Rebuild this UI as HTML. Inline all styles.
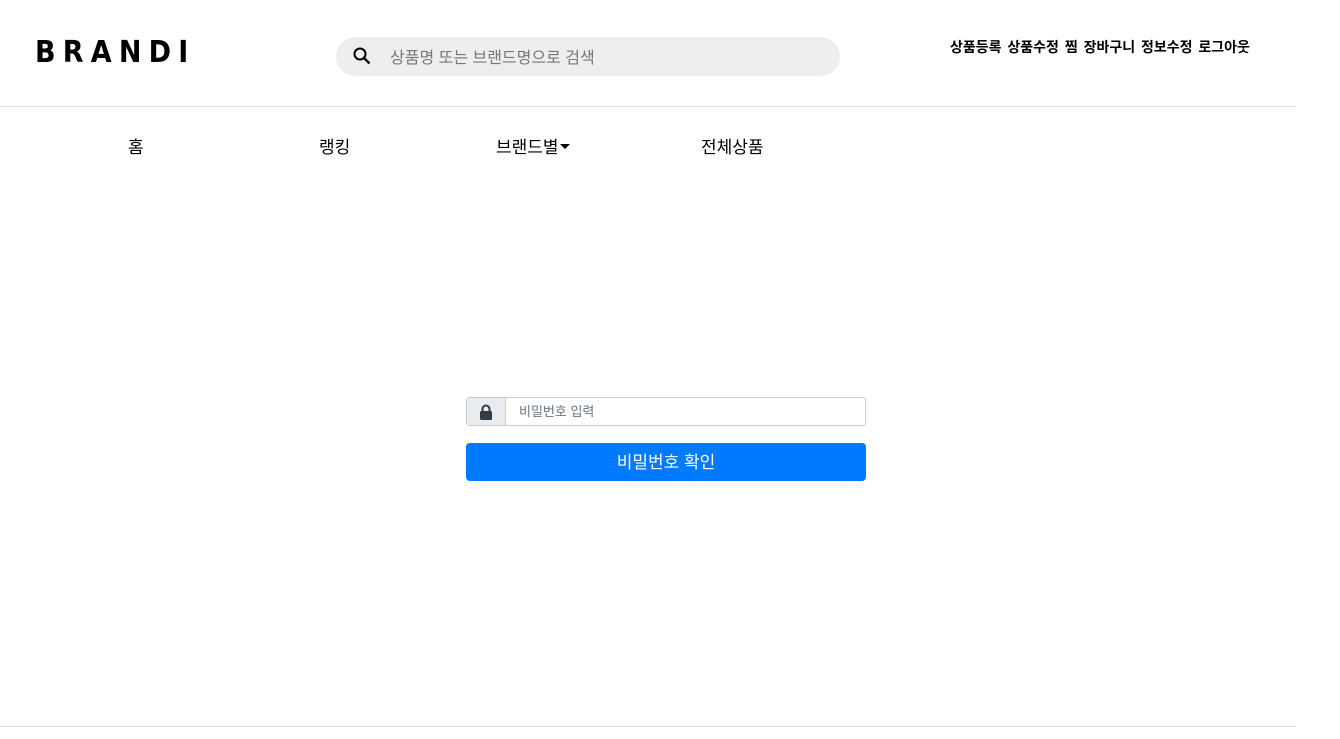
<!DOCTYPE html>
<html><head><meta charset="utf-8"><style>
*{margin:0;padding:0;box-sizing:border-box}
body{width:1340px;height:739px;background:#fff;font-family:"Liberation Sans","Noto Sans CJK KR",sans-serif;position:relative;overflow:hidden;color:#000}
.abs{position:absolute}
.logo{left:35px;top:36px;font-size:30px;font-weight:bold;letter-spacing:8px;line-height:34px;font-family:"DejaVu Sans","Liberation Sans",sans-serif;transform:scaleX(0.9);transform-origin:left}
.search{left:336px;top:37px;width:504px;height:39px;background:#eee;border-radius:20px}
.search span{position:absolute;left:54px;top:12px;font-size:16px;color:#777;line-height:20px}
.links{left:950px;top:38px;font-size:14px;font-weight:bold;line-height:18px;word-spacing:2px}
.hr{left:0;width:1296px;height:1px;background:#ddd}
.nav{top:138px;font-size:17px;line-height:20px}
.ig{left:466px;top:397px;width:400px;height:29px;border:1px solid #ccc;border-radius:3px}
.pre{position:absolute;left:0;top:0;width:39px;height:27px;background:#e9ecef;border-right:1px solid #ccc}
.ph{position:absolute;left:52px;top:6px;font-size:13px;color:#6c757d;line-height:16px}
.btn{left:466px;top:443px;width:400px;height:38px;background:#007bff;border-radius:4px;color:#fff;font-size:17px;text-align:center;line-height:40px}
</style></head><body>
<div class="abs logo">BRANDI</div>
<div class="abs search">
<svg style="position:absolute;left:16px;top:9px" width="20" height="20" viewBox="0 0 20 20"><circle cx="8" cy="8" r="5.5" fill="none" stroke="#000" stroke-width="2"/><line x1="12" y1="12" x2="17.5" y2="17.5" stroke="#000" stroke-width="2.4"/></svg>
<span>상품명 또는 브랜드명으로 검색</span></div>
<div class="abs links">상품등록 상품수정 찜 장바구니 정보수정 로그아웃</div>
<div class="abs hr" style="top:106px"></div>
<div class="abs nav" style="left:128px">홈</div>
<div class="abs nav" style="left:319px">랭킹</div>
<div class="abs nav" style="left:496px">브랜드별<span style="display:inline-block;width:0;height:0;border-left:5px solid transparent;border-right:5px solid transparent;border-top:5px solid #000;vertical-align:4px;margin-left:1px"></span></div>
<div class="abs nav" style="left:701px">전체상품</div>
<div class="abs ig"><div class="pre">
<svg style="position:absolute;left:12px;top:6px" width="14" height="16" viewBox="0 0 14 16"><path d="M3.5 7V5a3.5 3.5 0 0 1 7 0v2" fill="none" stroke="#343a40" stroke-width="2"/><rect x="1" y="7" width="12" height="9" rx="1.5" fill="#343a40"/></svg>
</div><span class="ph">비밀번호 입력</span></div>
<div class="abs btn">비밀번호 확인</div>
<div class="abs hr" style="top:726px"></div>
</body></html>
